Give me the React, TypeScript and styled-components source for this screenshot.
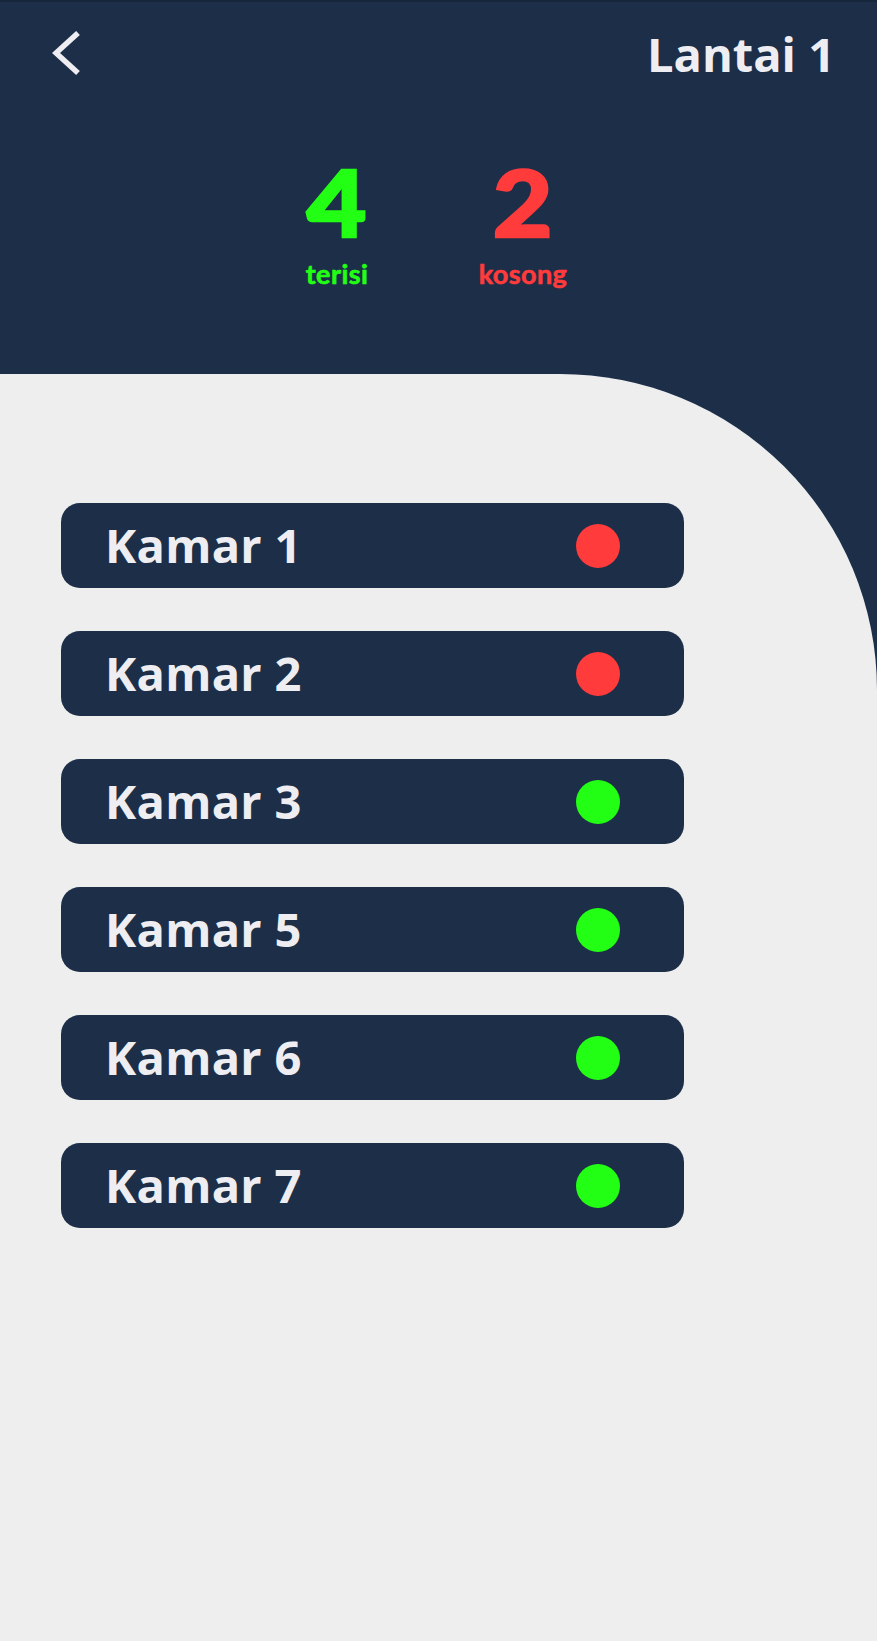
import React from "react";
import styled, { createGlobalStyle } from "styled-components";

const Global = createGlobalStyle`
  html, body { margin: 0; padding: 0; }
  body { background: #eeeeee; font-family: "Open Sans", "Liberation Sans", sans-serif; }
`;

const NAVY = "#1c2e48";
const GREEN = "#22ff14";
const RED = "#ff3b3b";
const WHITE = "#eeeef2";

const Page = styled.div`
  width: 877px;
  min-height: 1641px;
  background: ${NAVY};
  display: flex;
  flex-direction: column;
  border-top: 2px solid #16263b;
  box-sizing: border-box;
`;

const Header = styled.header`
  height: 372px;
  display: flex;
  flex-direction: column;
`;

const TopBar = styled.div`
  display: flex;
  align-items: center;
  justify-content: space-between;
  padding: 22px 42px 0 52px;
  height: 60px;
`;

const BackButton = styled.button`
  background: none;
  border: none;
  padding: 0;
  width: 34px;
  height: 46px;
  display: flex;
  align-items: center;
  cursor: pointer;
`;

const Title = styled.h1`
  margin: 0;
  font-family: "Open Sans", sans-serif;
  font-weight: 700;
  font-size: 47px;
  letter-spacing: 0;
  color: ${WHITE};
  line-height: 1;
`;

const Stats = styled.div`
  display: flex;
  justify-content: center;
  gap: 76px;
  padding-right: 17px;
  margin-top: 72px;
`;

const Stat = styled.div<{ $color: string }>`
  width: 110px;
  display: flex;
  flex-direction: column;
  align-items: center;
  color: ${(p) => p.$color};
`;

const Number = styled.div`
  font-family: Lato, "Open Sans", sans-serif;
  font-weight: 900;
  font-size: 92px;
  line-height: 92px;
  transform: scaleX(1.12);
  -webkit-text-stroke: 2.5px currentColor;
`;

const Label = styled.div`
  font-family: Lato, "Open Sans", sans-serif;
  font-weight: 700;
  font-size: 27px;
  line-height: 32px;
  margin-top: 10px;
  letter-spacing: 0.4px;
  -webkit-text-stroke: 0.6px currentColor;
`;

const Body = styled.main`
  flex: 1;
  background: #eeeeee;
  border-top-right-radius: 317px 316px;
  padding: 129px 0 60px 61px;
  display: flex;
  flex-direction: column;
  gap: 43px;
`;

const RoomCard = styled.div`
  width: 623px;
  height: 85px;
  box-sizing: border-box;
  background: ${NAVY};
  border-radius: 19px;
  display: flex;
  align-items: center;
  justify-content: space-between;
  padding: 0 64px 0 44px;
`;

const RoomName = styled.span`
  font-family: "Open Sans", sans-serif;
  font-weight: 700;
  font-size: 47px;
  letter-spacing: 0.3px;
  color: ${WHITE};
  line-height: 1;
`;

const Dot = styled.span<{ $occupied: boolean }>`
  width: 44px;
  height: 44px;
  border-radius: 50%;
  background: ${(p) => (p.$occupied ? GREEN : RED)};
`;

const rooms = [
  { name: "Kamar 1", occupied: false },
  { name: "Kamar 2", occupied: false },
  { name: "Kamar 3", occupied: true },
  { name: "Kamar 5", occupied: true },
  { name: "Kamar 6", occupied: true },
  { name: "Kamar 7", occupied: true },
];

export default function App() {
  const filled = rooms.filter((r) => r.occupied).length;
  const empty = rooms.length - filled;
  return (
    <>
      <Global />
      <Page>
        <Header>
          <TopBar>
            <BackButton aria-label="Kembali">
              <svg width="34" height="46" viewBox="0 0 34 46" fill="none">
                <polyline
                  points="26,2 4,22 26,42"
                  stroke={WHITE}
                  strokeWidth="5.5"
                  strokeLinecap="butt"
                  strokeLinejoin="miter"
                />
              </svg>
            </BackButton>
            <Title>Lantai 1</Title>
          </TopBar>
          <Stats>
            <Stat $color={GREEN}>
              <Number>{filled}</Number>
              <Label>terisi</Label>
            </Stat>
            <Stat $color={RED}>
              <Number>{empty}</Number>
              <Label>kosong</Label>
            </Stat>
          </Stats>
        </Header>
        <Body>
          {rooms.map((r) => (
            <RoomCard key={r.name}>
              <RoomName>{r.name}</RoomName>
              <Dot $occupied={r.occupied} />
            </RoomCard>
          ))}
        </Body>
      </Page>
    </>
  );
}
